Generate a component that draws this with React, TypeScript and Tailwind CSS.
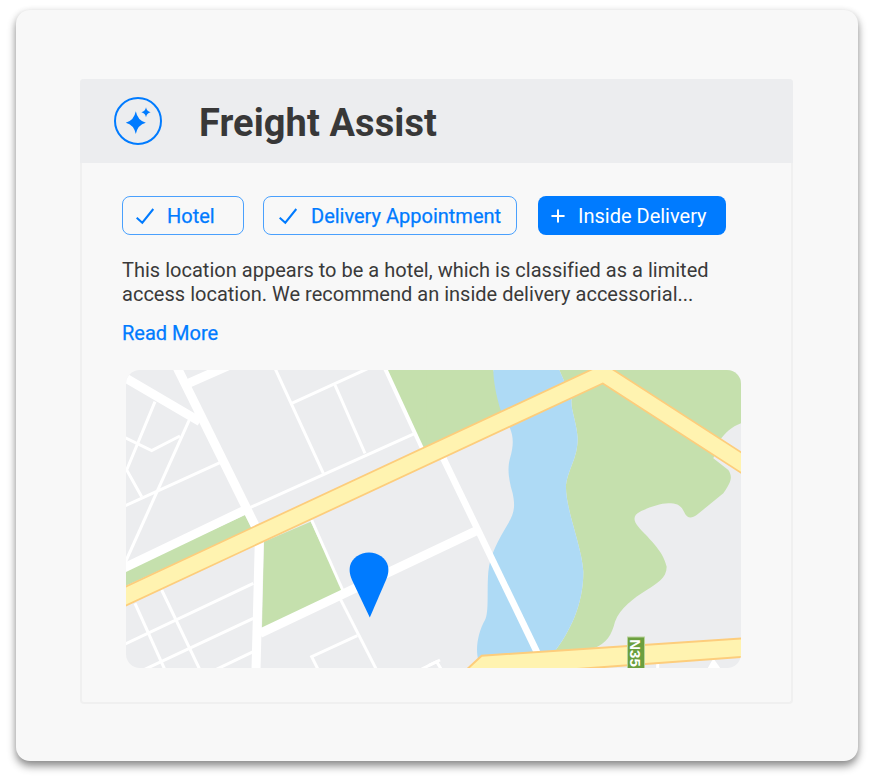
import React from 'react';
import { Plus } from 'lucide-react';

const font = { fontFamily: 'Roboto, sans-serif' };

const thick = [
  'M170 5L405 481',
  'M5 32L240 170',
  'M205 55L330 0',
  'M5 612L375 435',
  'M418 525L408 915',
  'M420 805L1070 497',
];
const thin = [
  'M465 10L610 325',
  'M515 115L745 10',
  'M645 60L735 265',
  'M385 430L885 205',
  'M575 465L668 675',
  'M660 700L770 915',
  'M5 213L95 257L180 213',
  'M105 110L20 315L65 395',
  'M210 160L10 605',
  'M5 427L300 293',
  'M125 675L240 915',
  'M45 715L135 915',
  'M5 842L400 655',
  'M70 915L400 760',
  'M285 915L400 860',
  'M712 812L575 875L595 915',
  'M905 912L960 885',
];

const MapPicture = () => (
  <svg viewBox="126 370 615 298" className="block w-[615px] h-[298px] rounded-[14px]">
    <rect x="126" y="370" width="615" height="298" fill="#ecedef" />
    {/* left half, traced in 3x crop units */}
    <g transform="translate(120 365) scale(0.33333)">
      <path d="M18 615L375 450L395 490L18 662Z" fill="#c5e0ad" />
      <path d="M432 530L572 470L668 675L426 790Z" fill="#c5e0ad" />
      <path d="M800 15L960 15L960 260L915 275Z" fill="#c5e0ad" />
      {thick.map((d) => (
        <path key={d} d={d} stroke="#fff" strokeWidth="27" fill="none" />
      ))}
      {thin.map((d) => (
        <path key={d} d={d} stroke="#fff" strokeWidth="9" fill="none" />
      ))}
      <path d="M795 10L915 270" stroke="#fff" strokeWidth="12" fill="none" />
    </g>
    {/* right half */}
    <g transform="translate(430 365) scale(0.33333)">
      <path d="M-10 15L190 15L230 150L-10 265Z" fill="#c5e0ad" />
      <path
        d="M388 15L933 15L933 175C905 185 885 205 870 225L850 280L895 315C908 335 905 350 880 385L800 450C785 460 772 462 762 440C752 420 740 415 715 415C690 415 650 430 630 440C610 450 608 465 625 485C650 515 700 555 710 605C710 640 680 655 650 675C610 700 570 730 555 770C545 810 530 835 490 850L370 865C420 800 460 720 460 620C455 540 405 430 408 360C415 310 443 280 443 220C440 170 420 130 425 100Z"
        fill="#c5e0ad"
      />
      <path
        d="M190 15L388 15L425 100C420 130 440 170 443 220C443 280 415 310 408 360C405 430 455 540 460 620C460 720 420 800 370 865L300 900L145 885C135 850 145 800 165 765C178 740 170 680 175 620C180 570 205 525 235 475C255 440 255 420 248 385C235 340 232 310 240 280C252 240 250 215 240 190L210 130C200 95 190 50 190 15Z"
        fill="#aedaf5"
      />
      <path d="M40 280L325 870" stroke="#fff" strokeWidth="20" fill="none" />
      <path d="M-5 902L20 890L35 915" stroke="#fff" strokeWidth="9" fill="none" />
      <path d="M683 885L683 915" stroke="#fff" strokeWidth="9" fill="none" />
      <path d="M830 915L850 880L875 915Z" fill="#fff" />
      <path d="M98 925L155 872L945 820L945 875L400 915Z" fill="#fff3b0" stroke="#fdcd7c" strokeWidth="6" />
    </g>
    <polyline points="116,600.6 603.3,373.6 760,474.7" fill="none" stroke="#fdcd7c" strokeWidth="19" />
    <polyline points="116,600.6 603.3,373.6 760,474.7" fill="none" stroke="#fff3b0" strokeWidth="15.5" />
    <rect x="627.5" y="637" width="17" height="33" fill="#6b9f3e" stroke="#b9d39c" strokeWidth="1" />
    <text
      x="635.7"
      y="653"
      transform="rotate(90 635.7 653)"
      textAnchor="middle"
      dominantBaseline="central"
      fill="#fff"
      fontSize="15"
      fontWeight="700"
      fontFamily="Liberation Sans, sans-serif"
    >
      N35
    </text>
    <path
      d="M369.8 617.5L352 580C349 573 349.5 569 350 566C352 558 360 552.5 369 552.5C378 552.5 386 558 388 566C388.5 569 389 573 386 580Z"
      fill="#007bff"
    />
  </svg>
);

const AssistIcon = () => (
  <svg width="50" height="50" viewBox="0 0 50 50" className="shrink-0">
    <circle cx="25" cy="25" r="23" fill="none" stroke="#007bff" strokeWidth="2" />
    <path d="M22.8 15.3Q24.6 24.6 32.8 26.7Q24.6 28.8 22.8 38Q21 28.8 12.8 26.7Q21 24.6 22.8 15.3Z" fill="#007bff" />
    <path d="M33 11.3Q33.6 15.4 37.6 16.3Q33.6 17.2 33 21.3Q32.4 17.2 28.4 16.3Q32.4 15.4 33 11.3Z" fill="#007bff" />
  </svg>
);

const CheckMark = () => (
  <svg width="20" height="18" viewBox="0 0 20 18" className="shrink-0">
    <path d="M1.7 10.7L7.3 15.7L18.3 2" fill="none" stroke="#007bff" strokeWidth="2" />
  </svg>
);

const Tag = ({ label, width, pad, gap }: { label: string; width: string; pad: string; gap: string }) => (
  <div className={`flex items-center h-[39px] ${width} ${pad} ${gap} rounded-lg border border-[#007bff]/70 text-[#007bff] text-[20px] [-webkit-text-stroke:0.25px_#007bff]`}>
    <CheckMark />
    <span>{label}</span>
  </div>
);

export default function App() {
  return (
    <div className="w-[874px] h-[784px] bg-white pt-[10px] pl-[16px]" style={font}>
      <div className="w-[842px] h-[751px] bg-[#f8f8f8] rounded-[14px] pt-[69px] pl-[64px] shadow-[0_5px_8px_rgba(0,0,0,0.45),0_0_6px_rgba(0,0,0,0.06)]">
        <div className="w-[713px] h-[625px] rounded border-2 border-t-0 border-[#f0f0f0]">
          <div className="flex items-center h-[84px] -mx-[2px] pl-[33px] gap-[36px] bg-[#ecedef] rounded-t">
            <AssistIcon />
            <h1 className="pt-[4px] text-[38px] font-bold tracking-[0.08px] text-[#383838]">Freight Assist</h1>
          </div>
          <div className="pt-[33px] pl-[40px]">
            <div className="flex items-center">
              <Tag label="Hotel" width="w-[122px]" pad="pl-[12px]" gap="gap-[12px]" />
              <div className="w-[19px]" />
              <Tag label="Delivery Appointment" width="w-[254px]" pad="pl-[14px]" gap="gap-[13px]" />
              <div className="w-[21px]" />
              <div className="flex items-center h-[39px] w-[188px] pl-[10px] gap-[10px] rounded-lg bg-[#007bff] text-white text-[20px]">
                <Plus size={20} strokeWidth={2.4} className="shrink-0" />
                <span>Inside Delivery</span>
              </div>
            </div>
            <p className="mt-[23px] w-[600px] text-[20px] tracking-[0.015px] leading-[24px] text-[#3a3a3a]">
              This location appears to be a hotel, which is classified as a limited access location. We recommend an inside delivery accessorial...
            </p>
            <div className="mt-[15px] text-[20px] leading-[24px] text-[#007bff] [-webkit-text-stroke:0.25px_#007bff]">Read More</div>
            <div className="mt-[25px] ml-[4px] w-[615px]">
              <MapPicture />
            </div>
          </div>
        </div>
      </div>
    </div>
  );
}
